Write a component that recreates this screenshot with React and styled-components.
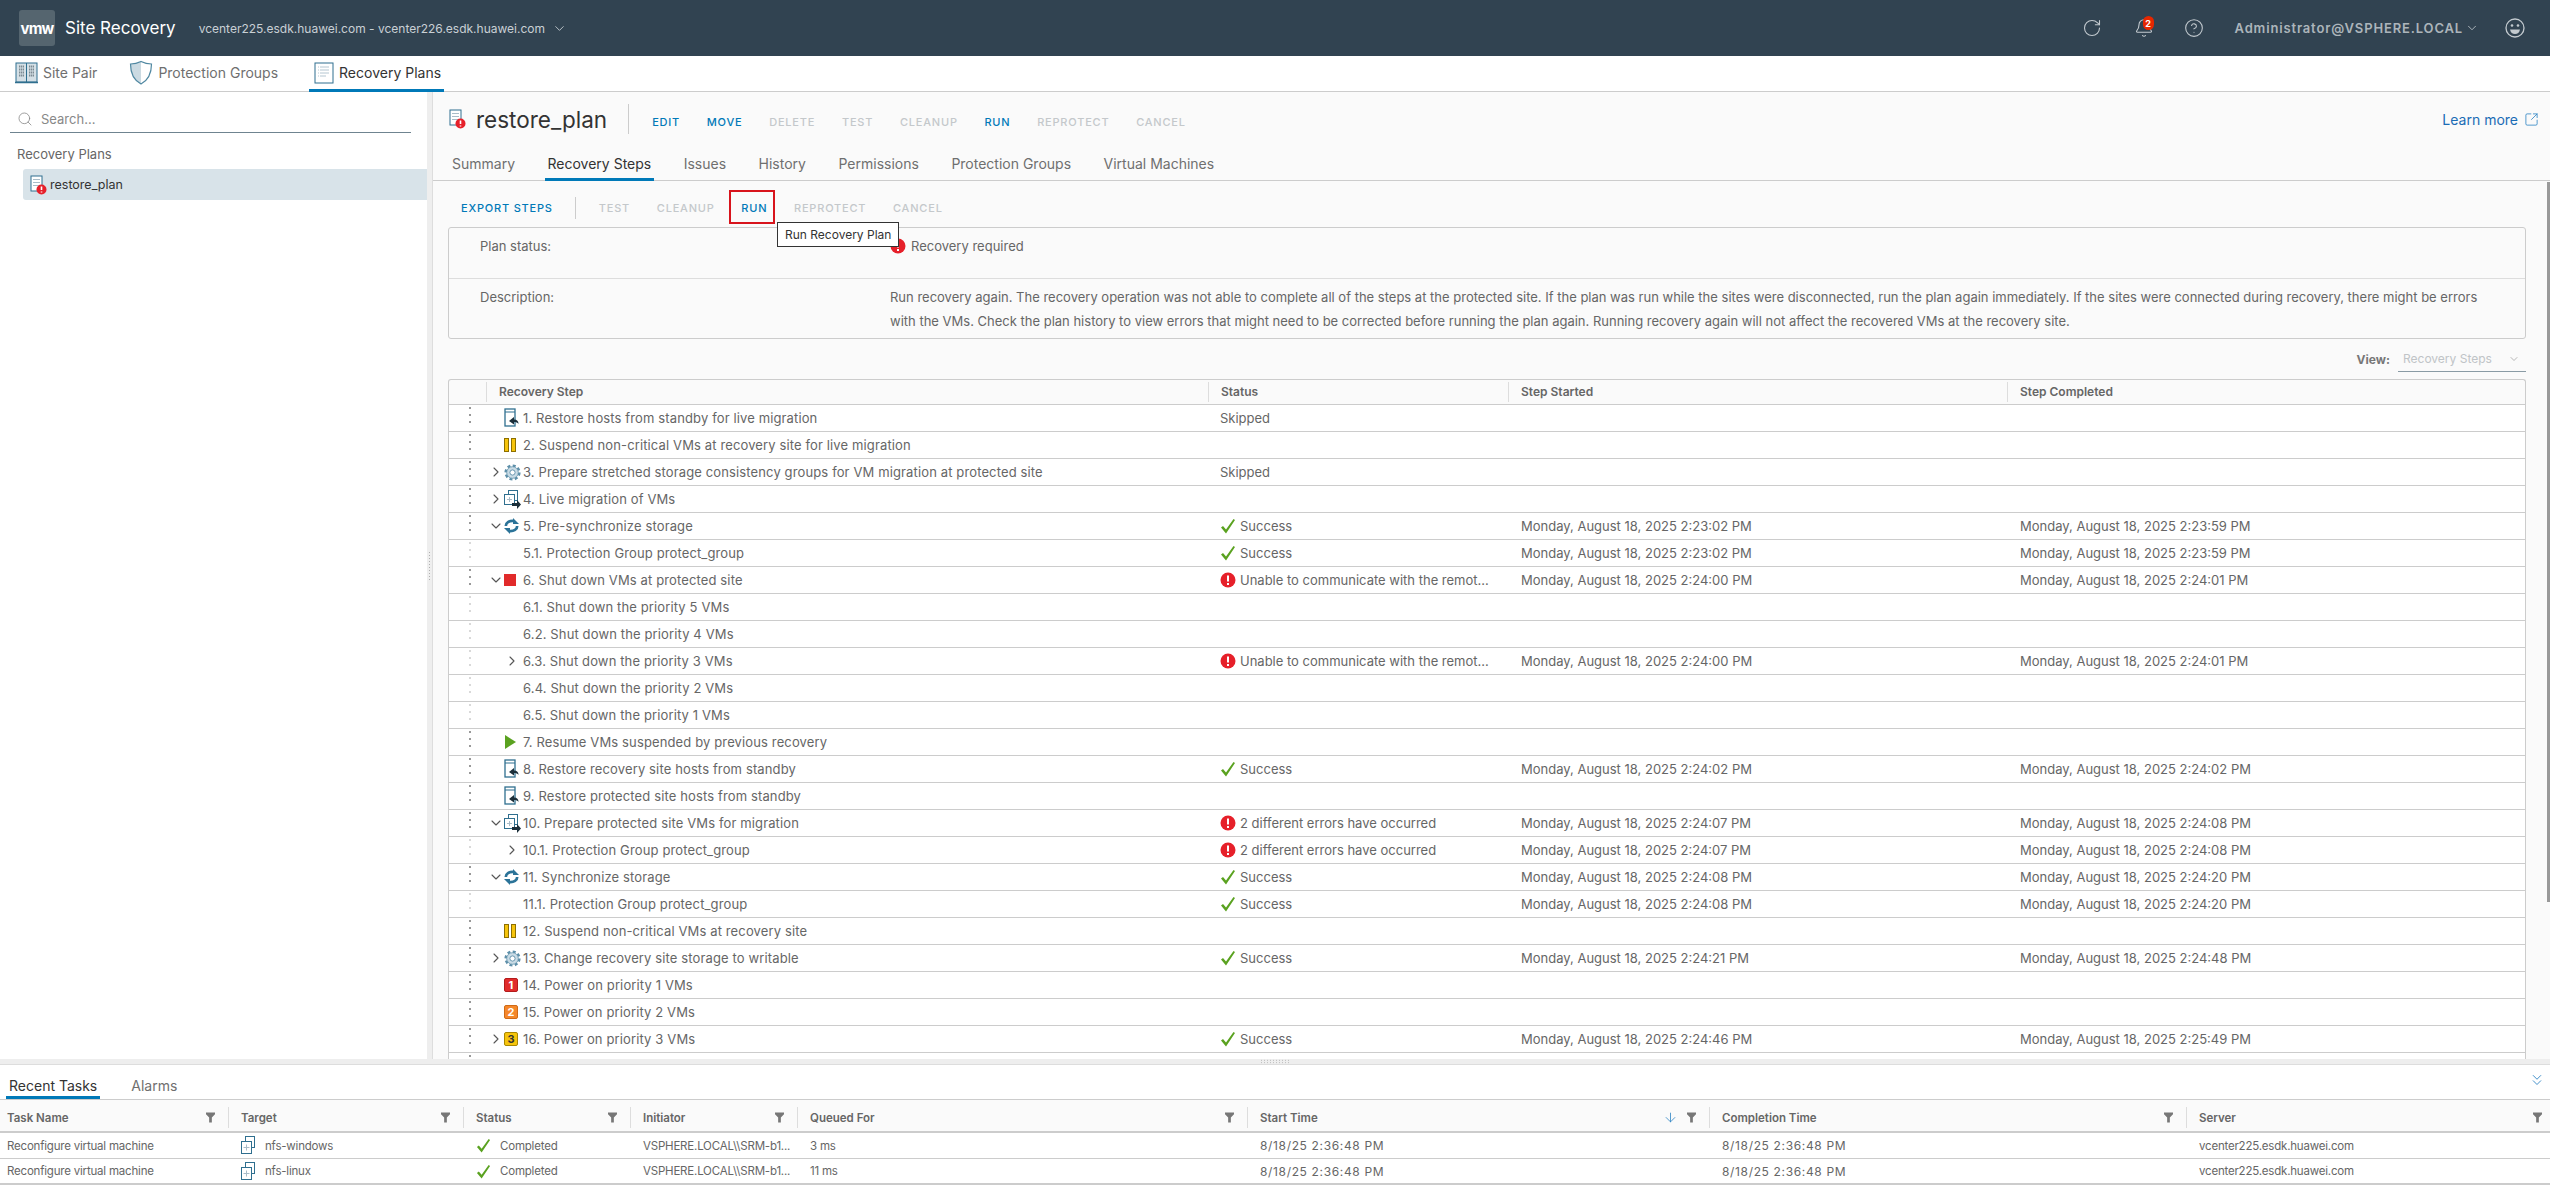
import React from "react";
import styled, { createGlobalStyle } from "styled-components";
import { ArrowDown, ChevronDown, ChevronRight, ChevronsDown, CircleHelp, RotateCw, Search, SquareArrowOutUpRight, Bell } from "lucide-react";

const FONT = `Inter, "Noto Sans", "Liberation Sans", sans-serif`;

const GlobalStyle = createGlobalStyle`
  html, body { margin: 0; padding: 0; background: #fff; }
  body { font-family: ${FONT}; color: #666; font-size: 13px; }
  * { box-sizing: border-box; }
`;

const PlanIcon = ({ error }) => (
  <svg width="17" height="20" viewBox="0 0 17 20">
    <rect x="1" y="1" width="11" height="15" fill="#fff" stroke="#2f6f8f" />
    <path d="M3 4.5h7M3 7.5h7M3 10.5h7" stroke="#a9bcc8" />
    {error && <circle cx="11.5" cy="14.5" r="5" fill="#e6202a" />}
    {error && <path d="M11.5 11.5v3.6M11.5 16.4v1" stroke="#fff" strokeWidth="1.6" />}
  </svg>
);

const NavPlanIcon = () => (
  <svg width="20" height="22" viewBox="0 0 20 22">
    <rect x="1" y="1" width="18" height="20" fill="#fff" stroke="#2f6f8f" />
    <path d="M6 5h9M6 8h9M6 11h9M6 14h6" stroke="#b4c6d1" />
    <path d="M4 5h1M4 8h1M4 11h1M4 14h1" stroke="#b4c6d1" />
  </svg>
);

const SitePairIcon = () => (
  <svg width="23" height="22" viewBox="0 0 23 22">
    <rect x="1" y="1" width="21" height="19" fill="#d5e0e6" stroke="#2f6f8f" />
    <path d="M11.5 1v19" stroke="#2f6f8f" />
    <path d="M0 20.5h23" stroke="#2f6f8f" strokeWidth="1.5" />
    <path d="M4 4.5h5M4 7.5h5M4 10.5h5M4 13.5h5M14 4.5h5M14 7.5h5M14 10.5h5M14 13.5h5" stroke="#7d8a92" strokeWidth="2" strokeDasharray="1.4 0.6" />
  </svg>
);

const ShieldIcon = () => (
  <svg width="24" height="25" viewBox="0 0 24 25">
    <path d="M12 1.5C8 3.5 5 4 1.5 4c0 9 3 16 10.5 20z" fill="#cbdae2" />
    <path d="M12 1.5c4 2 7 2.5 10.5 2.5 0 9-3 16-10.5 20C4.5 20 1.5 13 1.5 4 5 4 8 3.5 12 1.5z" fill="none" stroke="#4f87a1" strokeWidth="1.2" />
  </svg>
);

const RestoreIcon = () => (
  <svg width="16" height="20" viewBox="0 0 16 20">
    <rect x="1" y="1" width="10" height="17" fill="#fff" stroke="#2f6f8f" strokeWidth="1.3" />
    <path d="M1 4h10" stroke="#2f6f8f" />
    <path d="M14.5 16c0-3-1.5-4.5-4.5-4.5V9L5 13l5 3.5V14c2 0 3.5.5 4.5 2z" fill="#1c2f3a" />
  </svg>
);

const PauseIcon = () => (
  <svg width="12" height="14" viewBox="0 0 12 14">
    <rect x="0.5" y="0.5" width="4" height="13" fill="#f6c40c" stroke="#8d6f00" />
    <rect x="7.5" y="0.5" width="4" height="13" fill="#f6c40c" stroke="#8d6f00" />
  </svg>
);

const GearIcon = () => (
  <svg width="17" height="17" viewBox="0 0 17 17">
    <circle cx="8.5" cy="8.5" r="6.9" fill="none" stroke="#5d8fa9" strokeWidth="2.4" strokeDasharray="3 2.42" />
    <circle cx="8.5" cy="8.5" r="5.8" fill="#c9dbe5" stroke="#5d8fa9" strokeWidth="0.8" />
    <circle cx="8.5" cy="8.5" r="2.6" fill="#fff" stroke="#5d8fa9" strokeWidth="0.9" />
  </svg>
);

const MigrateIcon = () => (
  <svg width="17" height="19" viewBox="0 0 17 19">
    <rect x="4.5" y="0.5" width="9" height="10" fill="#fff" stroke="#2f6f8f" />
    <rect x="0.5" y="4.5" width="10" height="10" fill="#fff" stroke="#2f6f8f" />
    <path d="M5.5 7v5M3 9.5h5" stroke="#a9bcc8" />
    <path d="M8 13h5v-3l4 4.5-4 4.5v-3H8z" fill="#1c2f3a" />
  </svg>
);

const SyncArrow = () => (
  <>
    <path d="M1.8 8C1.8 4.5 5 2.700 9.500 3" fill="none" stroke="#2b7398" strokeWidth="2.700" />
    <path d="M9 0l6 6H9z" fill="#2b7398" />
  </>
);

const SyncIcon = () => (
  <svg width="15" height="16" viewBox="0 0 15 16">
    <SyncArrow />
    <g transform="rotate(180 7.5 8)"><SyncArrow /></g>
  </svg>
);

const SuccessIcon = ({ size = 16 }) => (
  <svg width={size} height={size} viewBox="0 0 16 16">
    <path d="M1 9.5l2-1.5 3 3.5L13.5 1 15 2 6 15.5z" fill="#5aa220" />
  </svg>
);

const ErrorIcon = () => (
  <svg width="16" height="16" viewBox="0 0 16 16">
    <circle cx="8" cy="8" r="7.5" fill="#e6202a" />
    <path d="M8 3.5v6M8 11v2" stroke="#fff" strokeWidth="2" />
  </svg>
);

const FilterIcon = () => (
  <svg width="9" height="11" viewBox="0 0 10 11">
    <path d="M0 0h10v2L6.5 5.5V11h-3V5.5L0 2z" fill="#777" />
  </svg>
);

const VmIcon = () => (
  <svg width="15" height="19" viewBox="0 0 15 19">
    <rect x="4.5" y="0.5" width="9" height="11" fill="#fff" stroke="#2f6f8f" />
    <rect x="0.5" y="5.5" width="10" height="12" fill="#fff" stroke="#2f6f8f" />
    <path d="M5.5 8.5v6M2.5 11.5h6" stroke="#a9bcc8" />
  </svg>
);

const SmileIcon = () => (
  <svg width="20" height="20" viewBox="0 0 20 20">
    <circle cx="10" cy="10" r="9" fill="none" stroke="currentColor" strokeWidth="1.3" />
    <circle cx="7" cy="7.5" r="1.3" fill="currentColor" />
    <circle cx="13" cy="7.5" r="1.3" fill="currentColor" />
    <path d="M5 11.5h10c-.5 3-2.5 4.5-5 4.5s-4.5-1.5-5-4.5z" fill="currentColor" />
  </svg>
);

const Shell = styled.div`
  width: 2550px;
  height: 1199px;
  display: flex;
  flex-direction: column;
  overflow: hidden;
  background: #fff;
`;

const Header = styled.header`
  height: 56px;
  flex: none;
  background: #314351;
  display: flex;
  align-items: center;
  padding-left: 19px;
`;

const Logo = styled.div`
  width: 36px;
  height: 36px;
  border-radius: 3px;
  background: #55656f;
  color: #fff;
  font-size: 15px;
  font-weight: 700;
  letter-spacing: -0.8px;
  display: flex;
  align-items: center;
  justify-content: center;
`;

const Product = styled.div`
  margin-left: 10px;
  font-size: 17px;
  color: #fff;
`;

const Hosts = styled.div`
  margin-left: 23px;
  font-size: 12px;
  color: #c9d0d5;
  display: flex;
  align-items: center;
  gap: 7px;
`;

const HeaderRight = styled.div`
  margin-left: auto;
  display: flex;
  align-items: center;
  color: #c3cacf;
  padding-right: 25px;
`;

const HeaderIcon = styled.span`
  display: flex;
  width: 20px;
  margin-right: ${(p) => p.$gap}px;
  position: relative;
`;

const BellBadge = styled.span`
  position: absolute;
  left: 9px;
  top: -2px;
  width: 11px;
  height: 14px;
  border-radius: 6px;
  background: #e62700;
  color: #fff;
  font-size: 9px;
  font-weight: 700;
  display: flex;
  align-items: center;
  justify-content: center;
`;

const UserName = styled.span`
  font-size: 13px;
  font-weight: 600;
  letter-spacing: 0.85px;
  color: #acb5bb;
`;

const UserMenu = styled.div`
  display: flex;
  align-items: center;
  gap: 2px;
  margin-right: 26px;
`;

const NavBar = styled.nav`
  height: 36px;
  flex: none;
  display: flex;
  border-bottom: 1px solid #ccc;
  padding-left: 6px;
`;

const NavItem = styled.div`
  height: 36px;
  display: flex;
  align-items: center;
  gap: ${(p) => p.$gap}px;
  padding: 0 3px 0 ${(p) => p.$pad}px;
  margin-right: ${(p) => p.$right}px;
  font-size: 14px;
  color: ${(p) => (p.$active ? "#333" : "#6f6f6f")};
  border-bottom: 3px solid ${(p) => (p.$active ? "#0079b8" : "transparent")};
`;

const Main = styled.div`
  flex: 1;
  min-height: 0;
  display: flex;
`;

const Sidebar = styled.aside`
  width: 427px;
  flex: none;
  background: #fff;
`;

const SearchBox = styled.div`
  margin: 14px 16px 0 10px;
  height: 27px;
  border-bottom: 1px solid #6f8490;
  display: flex;
  align-items: center;
  gap: 8px;
  padding-left: 7px;
  color: #888;
  font-size: 13px;
`;

const SideLabel = styled.div`
  margin: 13px 0 0 17px;
  height: 16px;
  line-height: 16px;
  font-size: 13px;
  color: #666;
`;

const TreeItem = styled.div`
  margin: 7px 0 0 23px;
  height: 31px;
  background: #d8e3e9;
  border-radius: 3px 0 0 3px;
  display: flex;
  align-items: center;
  gap: 3px;
  padding-left: 7px;
  font-size: 12.5px;
  color: #333;
`;

const VSplitter = styled.div`
  width: 6px;
  flex: none;
  background: #eee;
  border-right: 1px solid #ddd;
  position: relative;
`;

const VGrip = styled.span`
  position: absolute;
  left: 1px;
  top: 459px;
  width: 3px;
  height: 30px;
  background: radial-gradient(#b0b0b0 40%, transparent 45%) 0 0 / 3px 3px;
`;

const Content = styled.section`
  flex: 1;
  min-width: 0;
  background: #fafafa;
  display: flex;
  flex-direction: column;
  overflow: hidden;
  position: relative;
`;

const ScrollThumb = styled.span`
  position: absolute;
  right: 0;
  top: 90px;
  width: 3px;
  height: 720px;
  background: #999;
`;

const TitleRow = styled.div`
  height: 54px;
  flex: none;
  display: flex;
  align-items: center;
  padding: 0 11px 0 16px;
`;

const Title = styled.h1`
  margin: 0 21px 0 10px;
  font-size: 22.5px;
  font-weight: 400;
  color: #333;
`;

const Divider = styled.span`
  width: 1px;
  height: ${(p) => p.$h}px;
  background: #ccc;
  margin: 0 ${(p) => p.$right}px 0 ${(p) => p.$left || 0}px;
`;

const Actions = styled.div`
  display: flex;
  gap: 26.7px;
  padding-top: ${(p) => p.$top || 0}px;
`;

const Action = styled.span`
  font-size: 11px;
  font-weight: 500;
  letter-spacing: 0.8px;
  color: ${(p) => (p.$on ? "#0079b8" : "#c4c8cb")};
  position: relative;
`;

const RunFrame = styled.span`
  position: absolute;
  left: -12px;
  right: -8px;
  top: -11px;
  height: 34px;
  border: 2px solid #d8141c;
`;

const LearnMore = styled.a`
  margin-left: auto;
  display: flex;
  align-items: center;
  gap: 6px;
  font-size: 14px;
  color: #1b6cb5;
`;

const TabBar = styled.div`
  height: 35px;
  flex: none;
  display: flex;
  gap: 26.5px;
  padding-left: 16px;
  border-bottom: 1px solid #ccc;
`;

const Tab = styled.div`
  height: 35px;
  padding: 0 3px;
  font-size: 14px;
  line-height: 35px;
  color: ${(p) => (p.$active ? "#333" : "#6f6f6f")};
  border-bottom: 3px solid ${(p) => (p.$active ? "#0079b8" : "transparent")};
`;

const Steps = styled.div`
  flex: 1;
  min-height: 0;
  padding: 0 24px 0 15px;
`;

const Toolbar = styled.div`
  height: 46px;
  display: flex;
  align-items: center;
  padding: 8px 0 0 13px;
  position: relative;
`;

const Tooltip = styled.div`
  position: absolute;
  left: 329px;
  top: 41px;
  height: 25px;
  padding: 0 7px;
  background: #fff;
  border: 1px solid #333;
  font-size: 12px;
  line-height: 23px;
  color: #333;
  white-space: nowrap;
  z-index: 2;
`;

const InfoPanel = styled.div`
  height: 112px;
  border: 1px solid #ccc;
  border-radius: 3px;
`;

const InfoRow = styled.div`
  display: grid;
  grid-template-columns: 410px 1fr;
  height: ${(p) => p.$h}px;
  padding: 6px 0 0 31px;
  font-size: 13px;
  line-height: 24px;
  border-top: ${(p) => (p.$first ? "none" : "1px solid #ddd")};
`;

const InfoValue = styled.div`
  display: flex;
  align-items: flex-start;
  gap: 5px;
  & svg { margin-top: 4px; }
`;

const ViewRow = styled.div`
  height: 40px;
  display: flex;
  justify-content: flex-end;
  align-items: center;
  gap: 8px;
  padding: 7px 0;
  font-size: 12px;
`;

const ViewLabel = styled.span`
  font-weight: 700;
  color: #777;
`;

const ViewSelect = styled.div`
  width: 128px;
  height: 26px;
  padding: 0 6px 0 5px;
  border-bottom: 1px solid #8a9ba5;
  display: flex;
  justify-content: space-between;
  align-items: center;
  color: #c0c4c7;
  & svg { color: #999; }
`;

const StepTable = styled.div`
  border: 1px solid #ccc;
  border-bottom: none;
  border-radius: 3px 3px 0 0;
`;

const stepCols = "37px 722px 300px 499px 1fr";

const StepHead = styled.div`
  display: grid;
  grid-template-columns: ${stepCols};
  height: 25px;
  align-items: center;
  font-size: 12px;
  font-weight: 600;
  color: #666;
  border-bottom: 1px solid #ccc;
`;

const HeadCell = styled.div`
  height: 20px;
  line-height: 20px;
  padding-left: 12px;
  border-left: ${(p) => (p.$plain ? "none" : "1px solid #ddd")};
`;

const StepRow = styled.div`
  display: grid;
  grid-template-columns: ${stepCols};
  height: 27px;
  align-items: center;
  background: #fff;
  border-bottom: 1px solid #ccc;
`;

const DragCell = styled.div`
  align-self: start;
  padding: 2px 0 0 20px;
`;

const DragDots = styled.span`
  display: block;
  width: 2px;
  height: 2px;
  border-radius: 1px;
  background: ${(p) => (p.$soft ? "#ccc" : "#777")};
  box-shadow: 0 7px 0 ${(p) => (p.$soft ? "#ccc" : "#777")}, 0 14px 0 ${(p) => (p.$soft ? "#ccc" : "#777")};
`;

const StepCell = styled.div`
  display: flex;
  align-items: center;
  font-size: 13px;
  letter-spacing: 0.13px;
  color: #666;
  white-space: nowrap;
`;

const Twisty = styled.span`
  width: 18px;
  flex: none;
  display: flex;
  justify-content: flex-end;
  color: #555;
`;

const IconSlot = styled.span`
  width: 19px;
  flex: none;
  display: flex;
  align-items: center;
  color: #555;
`;

const StatusCell = styled.div`
  display: flex;
  align-items: center;
  gap: 4px;
  padding-left: 12px;
  font-size: 13px;
  color: #666;
  white-space: nowrap;
`;

const TimeCell = styled.div`
  padding-left: 13px;
  font-size: 13px;
  color: #666;
  white-space: nowrap;
`;

const PriorityBadge = styled.span`
  width: 14px;
  height: 14px;
  border-radius: 2px;
  display: flex;
  align-items: center;
  justify-content: center;
  font-size: 11px;
  font-weight: 700;
  background: ${(p) => p.$bg};
  color: ${(p) => p.$fg};
  border: 1px solid ${(p) => p.$line};
`;

const StopSquare = styled.span`
  width: 12px;
  height: 12px;
  background: #e12b2b;
`;

const PlayMark = styled.span`
  width: 0;
  height: 0;
  margin-left: 1px;
  border-left: 11px solid #5aa220;
  border-top: 7px solid transparent;
  border-bottom: 7px solid transparent;
`;

const HSplitter = styled.div`
  height: 6px;
  flex: none;
  background: #eee;
  border-bottom: 1px solid #ddd;
  display: flex;
  justify-content: center;
  align-items: center;
`;

const HGrip = styled.span`
  width: 30px;
  height: 5px;
  background: radial-gradient(#b0b0b0 40%, transparent 45%) 0 0 / 3px 2.5px;
`;

const TasksPanel = styled.section`
  height: 134px;
  flex: none;
  background: #fff;
`;

const TasksTabs = styled.div`
  height: 35px;
  display: flex;
  gap: 28px;
  padding-left: 6px;
  border-bottom: 1px solid #ccc;
  position: relative;
`;

const TasksTab = styled.div`
  height: 34px;
  padding: 9px 3px 0;
  line-height: 23px;
  font-size: 14px;
  color: ${(p) => (p.$active ? "#333" : "#6f6f6f")};
  border-bottom: 3px solid ${(p) => (p.$active ? "#0079b8" : "transparent")};
`;

const CollapseButton = styled.span`
  position: absolute;
  right: 4px;
  top: 6px;
  color: #2f85c4;
  display: flex;
`;

const taskCols = "228px 235px 167px 167px 450px 462px 477px 364px";

const TaskHead = styled.div`
  display: grid;
  grid-template-columns: ${taskCols};
  height: 33px;
  padding-bottom: 3px;
  background: #fafafa;
  border-bottom: 2px solid #ccc;
  align-items: end;
`;

const TaskHeadCell = styled.div`
  height: 21px;
  display: flex;
  align-items: center;
  gap: 9px;
  padding: 0 13px 0 12px;
  font-size: 11.5px;
  font-weight: 600;
  color: #666;
  border-left: 1px solid #ddd;
  &:first-child { border-left: none; padding-left: 7px; }
  &:last-child { padding-right: 8px; }
  & > span:first-child { margin-right: auto; }
`;

const TaskRow = styled.div`
  display: grid;
  grid-template-columns: ${taskCols};
  height: 26px;
  align-items: center;
  border-bottom: ${(p) => (p.$last ? "2px" : "1px")} solid #ccc;
  font-size: 11.5px;
  letter-spacing: -0.2px;
  color: #666;
`;

const TaskCell = styled.div`
  display: flex;
  align-items: center;
  gap: 9px;
  padding-left: 13px;
  white-space: nowrap;
  &:first-child { padding-left: 7px; }
`;

const TaskTime = styled(TaskCell)`
  font-size: 12px;
  letter-spacing: 0.65px;
`;

const right = <ChevronRight size={16} strokeWidth={1.6} />;
const down = <ChevronDown size={16} strokeWidth={1.6} />;

const ok = { kind: "ok", text: "Success" };
const comm = { kind: "err", text: "Unable to communicate with the remot..." };
const two = { kind: "err", text: "2 different errors have occurred" };
const skip = { kind: "none", text: "Skipped" };

const d = (t) => `Monday, August 18, 2025 ${t} PM`;

const steps = [
  { label: "1. Restore hosts from standby for live migration", icon: <RestoreIcon />, status: skip },
  { label: "2. Suspend non-critical VMs at recovery site for live migration", icon: <PauseIcon /> },
  { label: "3. Prepare stretched storage consistency groups for VM migration at protected site", twisty: right, icon: <GearIcon />, status: skip },
  { label: "4. Live migration of VMs", twisty: right, icon: <MigrateIcon /> },
  { label: "5. Pre-synchronize storage", twisty: down, icon: <SyncIcon />, status: ok, start: d("2:23:02"), end: d("2:23:59") },
  { label: "5.1. Protection Group protect_group", soft: true, status: ok, start: d("2:23:02"), end: d("2:23:59") },
  { label: "6. Shut down VMs at protected site", twisty: down, icon: <StopSquare />, status: comm, start: d("2:24:00"), end: d("2:24:01") },
  { label: "6.1. Shut down the priority 5 VMs", soft: true },
  { label: "6.2. Shut down the priority 4 VMs", soft: true },
  { label: "6.3. Shut down the priority 3 VMs", soft: true, icon: right, status: comm, start: d("2:24:00"), end: d("2:24:01") },
  { label: "6.4. Shut down the priority 2 VMs", soft: true },
  { label: "6.5. Shut down the priority 1 VMs", soft: true },
  { label: "7. Resume VMs suspended by previous recovery", icon: <PlayMark /> },
  { label: "8. Restore recovery site hosts from standby", icon: <RestoreIcon />, status: ok, start: d("2:24:02"), end: d("2:24:02") },
  { label: "9. Restore protected site hosts from standby", icon: <RestoreIcon /> },
  { label: "10. Prepare protected site VMs for migration", twisty: down, icon: <MigrateIcon />, status: two, start: d("2:24:07"), end: d("2:24:08") },
  { label: "10.1. Protection Group protect_group", soft: true, icon: right, status: two, start: d("2:24:07"), end: d("2:24:08") },
  { label: "11. Synchronize storage", twisty: down, icon: <SyncIcon />, status: ok, start: d("2:24:08"), end: d("2:24:20") },
  { label: "11.1. Protection Group protect_group", soft: true, status: ok, start: d("2:24:08"), end: d("2:24:20") },
  { label: "12. Suspend non-critical VMs at recovery site", icon: <PauseIcon /> },
  { label: "13. Change recovery site storage to writable", twisty: right, icon: <GearIcon />, status: ok, start: d("2:24:21"), end: d("2:24:48") },
  { label: "14. Power on priority 1 VMs", icon: <PriorityBadge $bg="#e12b2b" $fg="#fff" $line="#b31b1b">1</PriorityBadge> },
  { label: "15. Power on priority 2 VMs", icon: <PriorityBadge $bg="#f5872a" $fg="#fff" $line="#cf6a16">2</PriorityBadge> },
  { label: "16. Power on priority 3 VMs", twisty: right, icon: <PriorityBadge $bg="#f6c40c" $fg="#333" $line="#a98700">3</PriorityBadge>, status: ok, start: d("2:24:46"), end: d("2:25:49") },
  { label: "" },
];

const taskHeads = ["Task Name", "Target", "Status", "Initiator", "Queued For", "Start Time", "Completion Time", "Server"];

const tasks = [
  { target: "nfs-windows", queued: "3 ms" },
  { target: "nfs-linux", queued: "11 ms" },
];

const Status = ({ status }) => {
  if (!status) return <StatusCell />;
  return (
    <StatusCell>
      {status.kind === "ok" && <SuccessIcon />}
      {status.kind === "err" && <ErrorIcon />}
      {status.text}
    </StatusCell>
  );
};

export default function App() {
  return (
    <Shell>
      <GlobalStyle />
      <Header>
        <Logo>vmw</Logo>
        <Product>Site Recovery</Product>
        <Hosts>
          vcenter225.esdk.huawei.com - vcenter226.esdk.huawei.com
          <ChevronDown size={15} strokeWidth={1.4} />
        </Hosts>
        <HeaderRight>
          <HeaderIcon $gap={32}><RotateCw size={20} strokeWidth={1.3} /></HeaderIcon>
          <HeaderIcon $gap={30}>
            <Bell size={20} strokeWidth={1.3} />
            <BellBadge>2</BellBadge>
          </HeaderIcon>
          <HeaderIcon $gap={31}><CircleHelp size={20} strokeWidth={1.3} /></HeaderIcon>
          <UserMenu>
            <UserName>Administrator@VSPHERE.LOCAL</UserName>
            <ChevronDown size={14} strokeWidth={1.4} />
          </UserMenu>
          <HeaderIcon $gap={0}><SmileIcon /></HeaderIcon>
        </HeaderRight>
      </Header>
      <NavBar>
        <NavItem $pad={9} $gap={5} $right={29}><SitePairIcon /> Site Pair</NavItem>
        <NavItem $pad={0} $gap={5} $right={28}><ShieldIcon /> Protection Groups</NavItem>
        <NavItem $pad={5} $gap={5} $active $right={0}><NavPlanIcon /> Recovery Plans</NavItem>
      </NavBar>
      <Main>
        <Sidebar>
          <SearchBox>
            <Search size={16} strokeWidth={1.2} />
            Search...
          </SearchBox>
          <SideLabel>Recovery Plans</SideLabel>
          <TreeItem><PlanIcon error /> restore_plan</TreeItem>
        </Sidebar>
        <VSplitter><VGrip /></VSplitter>
        <Content>
          <ScrollThumb />
          <TitleRow>
            <PlanIcon error />
            <Title>restore_plan</Title>
            <Divider $h={30} $right={23} />
            <Actions $top={6}>
              <Action $on>EDIT</Action>
              <Action $on>MOVE</Action>
              <Action>DELETE</Action>
              <Action>TEST</Action>
              <Action>CLEANUP</Action>
              <Action $on>RUN</Action>
              <Action>REPROTECT</Action>
              <Action>CANCEL</Action>
            </Actions>
            <LearnMore>Learn more <SquareArrowOutUpRight size={15} strokeWidth={1.3} color="#2f85c4" /></LearnMore>
          </TitleRow>
          <TabBar>
            <Tab>Summary</Tab>
            <Tab $active>Recovery Steps</Tab>
            <Tab>Issues</Tab>
            <Tab>History</Tab>
            <Tab>Permissions</Tab>
            <Tab>Protection Groups</Tab>
            <Tab>Virtual Machines</Tab>
          </TabBar>
          <Steps>
            <Toolbar>
              <Action $on>EXPORT STEPS</Action>
              <Divider $h={22} $left={22} $right={23} />
              <Actions>
                <Action>TEST</Action>
                <Action>CLEANUP</Action>
                <Action $on>RUN<RunFrame /></Action>
                <Action>REPROTECT</Action>
                <Action>CANCEL</Action>
              </Actions>
              <Tooltip>Run Recovery Plan</Tooltip>
            </Toolbar>
            <InfoPanel>
              <InfoRow $first $h={50}>
                <div>Plan status:</div>
                <InfoValue><ErrorIcon /> Recovery required</InfoValue>
              </InfoRow>
              <InfoRow $h={60}>
                <div>Description:</div>
                <div>
                  Run recovery again. The recovery operation was not able to complete all of the steps at the protected site. If the plan was run while the sites were disconnected, run the plan again immediately. If the sites were connected during recovery, there might be errors
                  <br />
                  with the VMs. Check the plan history to view errors that might need to be corrected before running the plan again. Running recovery again will not affect the recovered VMs at the recovery site.
                </div>
              </InfoRow>
            </InfoPanel>
            <ViewRow>
              <ViewLabel>View:</ViewLabel>
              <ViewSelect>Recovery Steps <ChevronDown size={12} strokeWidth={1.4} /></ViewSelect>
            </ViewRow>
            <StepTable>
              <StepHead>
                <HeadCell $plain />
                <HeadCell>Recovery Step</HeadCell>
                <HeadCell>Status</HeadCell>
                <HeadCell>Step Started</HeadCell>
                <HeadCell>Step Completed</HeadCell>
              </StepHead>
              {steps.map((step, i) => (
                <StepRow key={i}>
                  <DragCell><DragDots $soft={step.soft} /></DragCell>
                  <StepCell>
                    <Twisty>{step.twisty}</Twisty>
                    <IconSlot>{step.icon}</IconSlot>
                    {step.label}
                  </StepCell>
                  <Status status={step.status} />
                  <TimeCell>{step.start}</TimeCell>
                  <TimeCell>{step.end}</TimeCell>
                </StepRow>
              ))}
            </StepTable>
          </Steps>
        </Content>
      </Main>
      <HSplitter><HGrip /></HSplitter>
      <TasksPanel>
        <TasksTabs>
          <TasksTab $active>Recent Tasks</TasksTab>
          <TasksTab>Alarms</TasksTab>
          <CollapseButton><ChevronsDown size={18} strokeWidth={1.2} /></CollapseButton>
        </TasksTabs>
        <TaskHead>
          {taskHeads.map((h) => (
            <TaskHeadCell key={h}>
              <span>{h}</span>
              {h === "Start Time" && <ArrowDown size={15} color="#2f85c4" strokeWidth={1.3} />}
              <FilterIcon />
            </TaskHeadCell>
          ))}
        </TaskHead>
        {tasks.map((t, i) => (
          <TaskRow key={t.target} $last={i === tasks.length - 1}>
            <TaskCell>Reconfigure virtual machine</TaskCell>
            <TaskCell><VmIcon /> {t.target}</TaskCell>
            <TaskCell><SuccessIcon size={15} /> Completed</TaskCell>
            <TaskCell>VSPHERE.LOCAL\\SRM-b1...</TaskCell>
            <TaskCell>{t.queued}</TaskCell>
            <TaskTime>8/18/25 2:36:48 PM</TaskTime>
            <TaskTime>8/18/25 2:36:48 PM</TaskTime>
            <TaskCell>vcenter225.esdk.huawei.com</TaskCell>
          </TaskRow>
        ))}
      </TasksPanel>
    </Shell>
  );
}
